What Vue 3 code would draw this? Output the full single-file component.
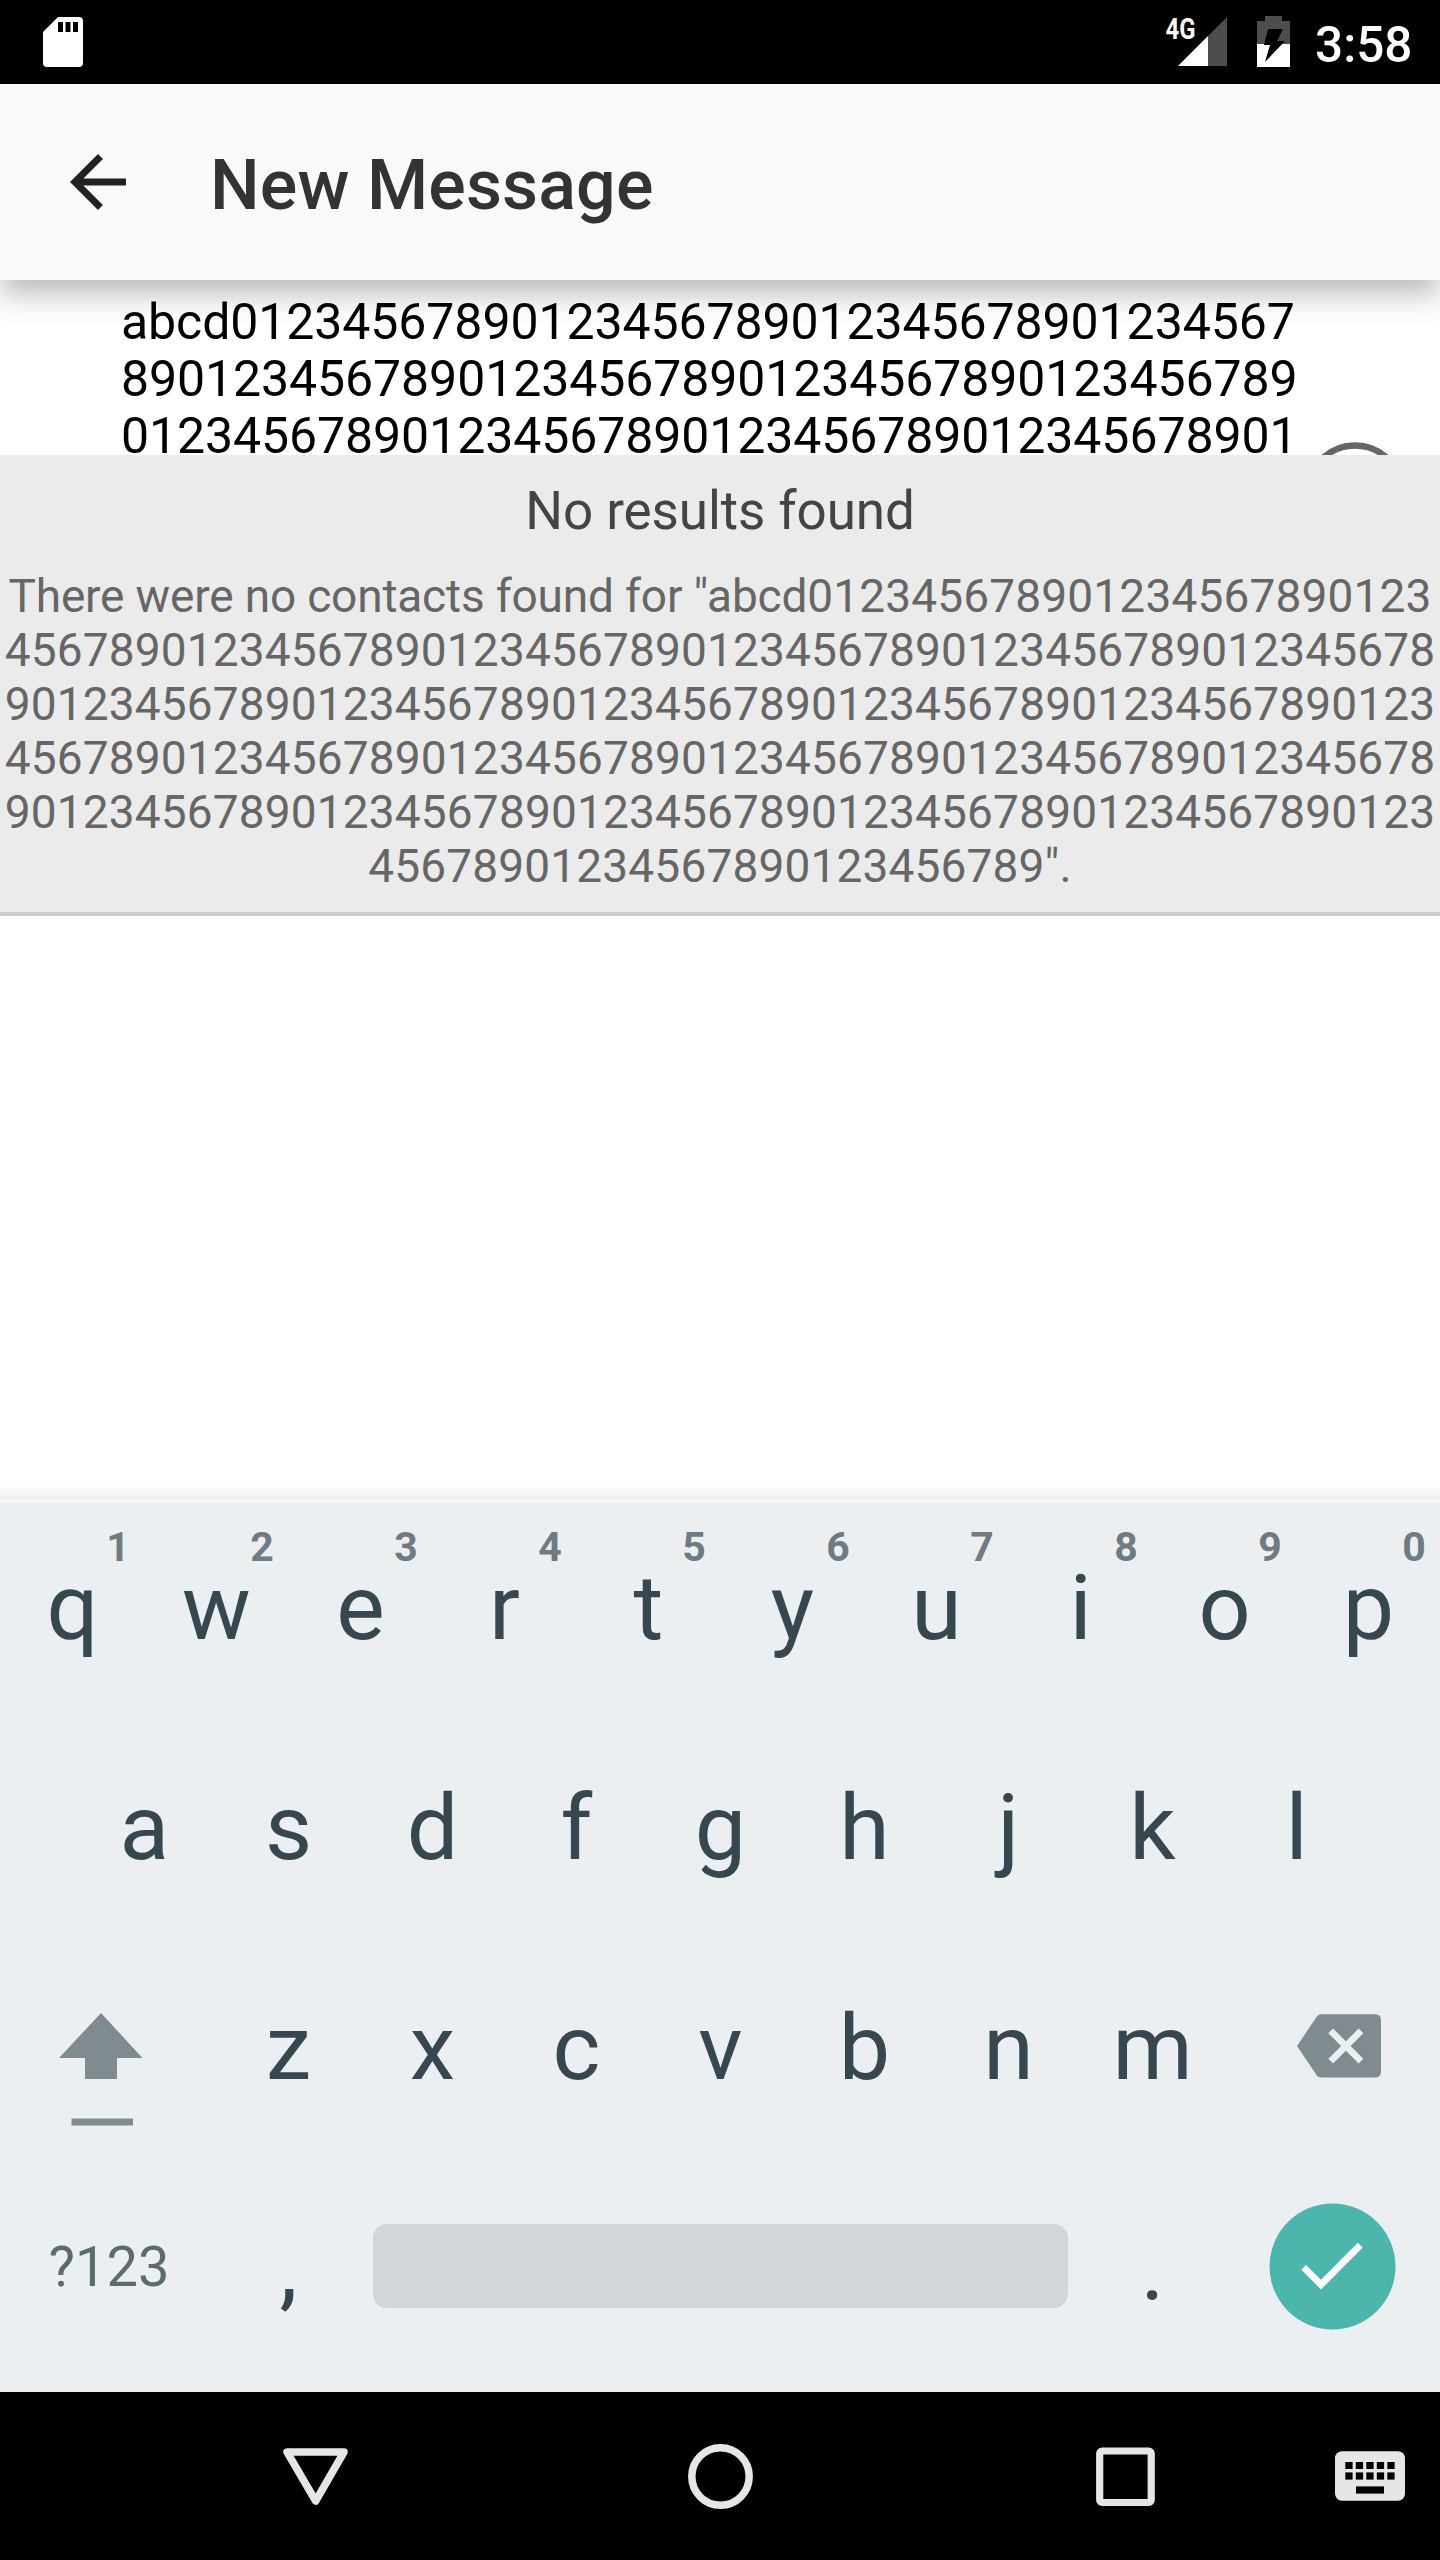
<script setup>
const topRow = ['q', 'w', 'e', 'r', 't', 'y', 'u', 'i', 'o', 'p'].map((letter, i) => ({
  letter,
  hint: String((i + 1) % 10),
}))
const middleRow = ['a', 's', 'd', 'f', 'g', 'h', 'j', 'k', 'l']
const bottomRow = ['z', 'x', 'c', 'v', 'b', 'n', 'm']

// Digits cycling 0-9, starting at `start`
const digits = (start, count) =>
  Array.from({ length: count }, (_, i) => (start + i) % 10).join('')

const recipientLines = ['abcd' + digits(0, 38), digits(8, 42), digits(0, 42)]
const messageIntro = 'There were no contacts found for "abcd'
const messageLines = [
  digits(0, 24),
  digits(4, 55),
  digits(9, 55),
  digits(4, 55),
  digits(9, 55),
  digits(4, 26) + '".',
]
const keyColumns = [0, 1, 2, 3, 4]
</script>

<template>
  <div class="screen">
    <header class="status">
      <svg class="sd" width="40" height="50" viewBox="0 0 40 50">
        <path d="M15 0H36Q40 0 40 4V46Q40 50 36 50H4Q0 50 0 46V15Z" fill="#fff" />
        <path d="M15 5h5v10h-5zM22.500 5h5v10h-5zM30 5h5v10h-5z" fill="#000" />
      </svg>
      <div class="status-right">
        <svg width="126" height="84" viewBox="1165 0 126 84">
          <text x="1165.500" y="39" class="network" textLength="30" lengthAdjust="spacingAndGlyphs">4G</text>
          <path d="M1227 17V66H1178Z" fill="#4d4d4d" />
          <path d="M1208 36V66H1178Z" fill="#fff" />
          <path d="M1265 16H1282V21H1290V44H1257V21H1265Z" fill="#4d4d4d" />
          <path d="M1257 44H1290V67H1257Z" fill="#fff" />
          <path d="M1268 29H1283L1277 41H1285L1265 62L1270 45H1264Z" fill="#000" />
        </svg>
        <span class="time">3:58</span>
      </div>
    </header>

    <div class="appbar">
      <svg width="84" height="84" viewBox="0 0 24 24">
        <path d="M20 11H7.830l5.590-5.590L12 4l-8 8 8 8 1.410-1.410L7.830 13H20v-2z" fill="#212121" />
      </svg>
      <h1>New Message</h1>
    </div>

    <section class="compose">
      <div class="recipient">
        <div v-for="line in recipientLines" :key="line">{{ line }}</div>
      </div>
      <svg class="add" width="102" height="102" viewBox="0 0 102 102">
        <circle cx="51" cy="51" r="47.500" fill="none" stroke="#666" stroke-width="6.500" />
      </svg>
    </section>

    <section class="empty">
      <h2>No results found</h2>
      <div class="message">
        <div v-for="(line, i) in messageLines" :key="i"><span v-if="i === 0" class="intro">{{ messageIntro }}</span>{{ line }}</div>
      </div>
    </section>

    <main class="blank"></main>

    <section class="keyboard">
      <div class="rows">
        <div class="row">
          <div v-for="key in topRow" :key="key.letter" class="key">
            {{ key.letter }}<span class="hint">{{ key.hint }}</span>
          </div>
        </div>
        <div class="row">
          <div v-for="letter in middleRow" :key="letter" class="key">{{ letter }}</div>
        </div>
        <div class="row">
          <svg width="216" height="220" viewBox="0 1938 216 220" fill="#808b8f">
            <path d="M101 2013L142.500 2058H117V2079H85V2058H59Z" />
            <path d="M71.500 2118.500H133V2125.500H71.500Z" />
          </svg>
          <div v-for="letter in bottomRow" :key="letter" class="key">{{ letter }}</div>
          <svg width="216" height="220" viewBox="1224 1938 216 220">
            <path d="M1321 2014.300H1375Q1381 2014.300 1381 2020.300V2071.500Q1381 2077.500 1375 2077.500H1321Q1318 2077.500 1316.500 2075L1297 2046L1316.500 2017Q1318 2014.300 1321 2014.300Z" fill="#808b8f" />
            <path d="M1330.700 2030.800L1361 2061.200M1361 2030.800L1330.700 2061.200" stroke="#ebeff2" stroke-width="6.600" />
          </svg>
        </div>
        <div class="row">
          <div class="symbols">?123</div>
          <div class="key">,</div>
          <div class="space"></div>
          <div class="key">.</div>
          <svg width="216" height="220" viewBox="1224 2158 216 220">
            <circle cx="1332.500" cy="2266.500" r="63" fill="#4db6ac" />
            <path d="M1301.300 2269.700L1306 2265L1321 2279.800L1357.800 2242.700L1362.700 2247.500L1321 2289.500Z" fill="#fff" />
          </svg>
        </div>
      </div>
    </section>

    <nav class="navbar">
      <svg width="1440" height="168" viewBox="0 2392 1440 168" fill="none" stroke="#e6e6e6">
        <path d="M287 2452H344L315.700 2501Z" stroke-width="7.500" stroke-linejoin="round" />
        <circle cx="720.500" cy="2476.500" r="28.700" stroke-width="7.500" />
        <rect x="1099.700" y="2451" width="51.500" height="51.500" rx="2.500" stroke-width="7.200" />
        <g stroke="none">
          <rect x="1335" y="2451.300" width="70" height="49.500" rx="7" fill="#e6e6e6" />
          <g fill="#000">
            <rect v-for="c in keyColumns" :key="'a' + c" :x="1345.300 + c * 10.500" y="2462" width="7.300" height="7" />
            <rect v-for="c in keyColumns" :key="'b' + c" :x="1345.300 + c * 10.500" y="2472.400" width="7.300" height="7.200" />
            <rect x="1356" y="2486.400" width="28" height="7.200" />
          </g>
        </g>
      </svg>
    </nav>
  </div>
</template>

<style>
body {
  margin: 0;
}
</style>

<style scoped>
.screen {
  width: 1440px;
  height: 2560px;
  display: flex;
  flex-direction: column;
  overflow: hidden;
  background: #fff;
  font-family: Roboto, sans-serif;
}
svg {
  display: block;
  flex: none;
}
.status {
  flex: none;
  height: 84px;
  background: #000;
  display: flex;
  justify-content: space-between;
  align-items: center;
  padding: 0 28px 0 43px;
}
.status-right {
  display: flex;
  align-items: center;
  gap: 24px;
}
.network {
  font: 700 29px Roboto, sans-serif;
  fill: #fff;
}
.time {
  color: #fff;
  font-size: 49.5px;
  font-weight: 500;
  line-height: 78px;
  padding-top: 6px;
  width: 97px;
}
.appbar {
  flex: none;
  height: 196px;
  box-sizing: border-box;
  padding-left: 56px;
  display: flex;
  align-items: center;
  gap: 70px;
  background: #f9f9f9;
  position: relative;
  z-index: 1;
  box-shadow: 0 14px 28px rgba(0, 0, 0, 0.27);
}
h1 {
  margin: 0;
  padding-top: 6px;
  font-size: 70px;
  font-weight: 500;
  line-height: 84px;
  letter-spacing: 0.12px;
  color: #333;
}
.compose {
  flex: none;
  height: 175px;
  box-sizing: border-box;
  padding: 14px 34px 0 121px;
  display: flex;
  justify-content: space-between;
  align-items: flex-start;
  overflow: hidden;
}
.recipient {
  font-size: 50px;
  line-height: 57px;
  letter-spacing: -0.09px;
  color: #000;
  white-space: nowrap;
}
.add {
  margin-top: 148px;
}
.empty {
  flex: none;
  height: 461px;
  box-sizing: border-box;
  padding-top: 25px;
  background: #ebebeb;
  border-bottom: 4px solid #ccc;
  text-align: center;
}
h2 {
  margin: 0 0 27px;
  font-size: 53px;
  font-weight: 400;
  line-height: 62px;
  letter-spacing: -0.1px;
  color: #444;
}
.message {
  font-size: 46px;
  line-height: 54px;
  letter-spacing: 0.16px;
  color: #666;
  white-space: nowrap;
}
.intro {
  letter-spacing: -0.17px;
}
.blank {
  flex: 1;
  background: linear-gradient(to top, #f0f0f0, #fff 14px);
}
.keyboard {
  flex: none;
  height: 893px;
  box-sizing: border-box;
  border-top: 4px solid #f5f6f6;
  background: #ebeff2;
}
.rows {
  margin-top: -5px;
}
.row {
  height: 220px;
  display: flex;
  justify-content: center;
  align-items: center;
}
.key {
  position: relative;
  box-sizing: border-box;
  width: 144px;
  padding-left: 1px;
  line-height: 220px;
  text-align: center;
  font-size: 91.5px;
  color: #37474f;
}
.hint {
  position: absolute;
  left: 88px;
  top: 19px;
  width: 60px;
  line-height: 60px;
  font-size: 41px;
  font-weight: 700;
  color: #6f7b80;
}
.symbols {
  box-sizing: border-box;
  width: 216px;
  padding: 0 0 2px 2px;
  text-align: center;
  font-size: 56px;
  color: #5c6b70;
}
.space {
  width: 695px;
  height: 84px;
  margin: 0 12px 4px 13px;
  border-radius: 14px;
  background: #d1d6d9;
}
.navbar {
  flex: none;
  height: 168px;
  background: #000;
}
</style>
